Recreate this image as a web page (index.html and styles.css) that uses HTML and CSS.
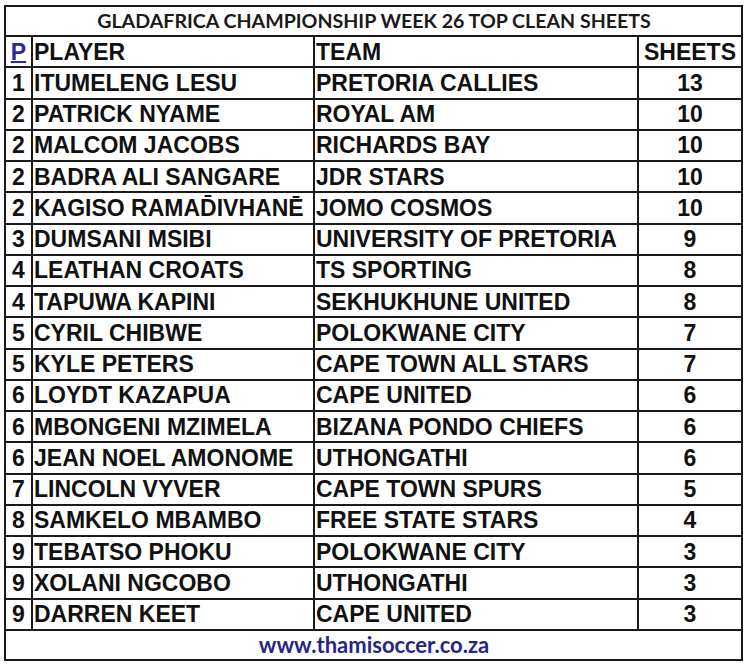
FILE: index.html
```html
<!DOCTYPE html>
<html>
<head>
<meta charset="utf-8">
<link rel="stylesheet" href="styles.css">
</head>
<body>
<table class="sheet">
  <colgroup>
    <col class="c-pos"><col class="c-player"><col class="c-team"><col class="c-sheets">
  </colgroup>
  <tr class="title-row"><td colspan="4" class="title">GLADAFRICA CHAMPIONSHIP WEEK 26 TOP CLEAN SHEETS</td></tr>
  <tr class="head-row"><td class="pos"><span class="p-link">P</span></td><td>PLAYER</td><td>TEAM</td><td class="num">SHEETS</td></tr>
  <tr><td class="pos">1</td><td>ITUMELENG LESU</td><td>PRETORIA CALLIES</td><td class="num">13</td></tr>
  <tr><td class="pos">2</td><td>PATRICK NYAME</td><td>ROYAL AM</td><td class="num">10</td></tr>
  <tr><td class="pos">2</td><td>MALCOM JACOBS</td><td>RICHARDS BAY</td><td class="num">10</td></tr>
  <tr><td class="pos">2</td><td>BADRA ALI SANGARE</td><td>JDR STARS</td><td class="num">10</td></tr>
  <tr><td class="pos">2</td><td>KAGISO RAMAD̄IVHANĒ</td><td>JOMO COSMOS</td><td class="num">10</td></tr>
  <tr><td class="pos">3</td><td>DUMSANI MSIBI</td><td>UNIVERSITY OF PRETORIA</td><td class="num">9</td></tr>
  <tr><td class="pos">4</td><td>LEATHAN CROATS</td><td>TS SPORTING</td><td class="num">8</td></tr>
  <tr><td class="pos">4</td><td>TAPUWA KAPINI</td><td>SEKHUKHUNE UNITED</td><td class="num">8</td></tr>
  <tr><td class="pos">5</td><td>CYRIL CHIBWE</td><td>POLOKWANE CITY</td><td class="num">7</td></tr>
  <tr><td class="pos">5</td><td>KYLE PETERS</td><td>CAPE TOWN ALL STARS</td><td class="num">7</td></tr>
  <tr><td class="pos">6</td><td>LOYDT KAZAPUA</td><td>CAPE UNITED</td><td class="num">6</td></tr>
  <tr><td class="pos">6</td><td>MBONGENI MZIMELA</td><td>BIZANA PONDO CHIEFS</td><td class="num">6</td></tr>
  <tr><td class="pos">6</td><td>JEAN NOEL AMONOME</td><td>UTHONGATHI</td><td class="num">6</td></tr>
  <tr><td class="pos">7</td><td>LINCOLN VYVER</td><td>CAPE TOWN SPURS</td><td class="num">5</td></tr>
  <tr><td class="pos">8</td><td>SAMKELO MBAMBO</td><td>FREE STATE STARS</td><td class="num">4</td></tr>
  <tr><td class="pos">9</td><td>TEBATSO PHOKU</td><td>POLOKWANE CITY</td><td class="num">3</td></tr>
  <tr><td class="pos">9</td><td>XOLANI NGCOBO</td><td>UTHONGATHI</td><td class="num">3</td></tr>
  <tr><td class="pos">9</td><td>DARREN KEET</td><td>CAPE UNITED</td><td class="num">3</td></tr>
  <tr class="foot-row"><td colspan="4" class="footer">www.thamisoccer.co.za</td></tr>
</table>
</body>
</html>
```
FILE: styles.css
```css
html, body {
  margin: 0;
  padding: 0;
  background: #ffffff;
}
body {
  padding: 5px 0 0 4px;
}
.sheet {
  border-collapse: collapse;
  table-layout: fixed;
  width: 737px;
  border: 2px solid #111;
  font-family: "Liberation Sans", Arial, sans-serif;
  font-weight: bold;
  font-size: 23px;
  color: #111;
}
.c-pos { width: 27px; }
.c-player { width: 282px; }
.c-team { width: 324px; }
.c-sheets { width: 104px; }
.sheet td {
  border: 2px solid #1a1a1a;
  height: 31.25px;
  padding: 0 0 0 1px;
  box-sizing: border-box;
  line-height: 26px;
  white-space: nowrap;
  overflow: hidden;
  vertical-align: middle;
}
.sheet .title-row td {
  height: 30px;
}
.title {
  font-family: Lato, "Open Sans", sans-serif;
  font-size: 19.6px;
  text-align: center;
  color: #1a1a1a;
}
.pos {
  text-align: center;
}
.sheet td.pos { padding: 0; }
.num {
  text-align: center;
}
.sheet td.num { padding: 0; }
.p-link {
  color: #2b2b9e;
  text-decoration: underline;
  text-decoration-thickness: 2px;
}
.footer {
  font-family: Lato, "Open Sans", sans-serif;
  font-size: 22px;
  text-align: center;
  color: #25258a;
}
.sheet .foot-row td {
  height: 30px;
  line-height: 24px;
}
```
